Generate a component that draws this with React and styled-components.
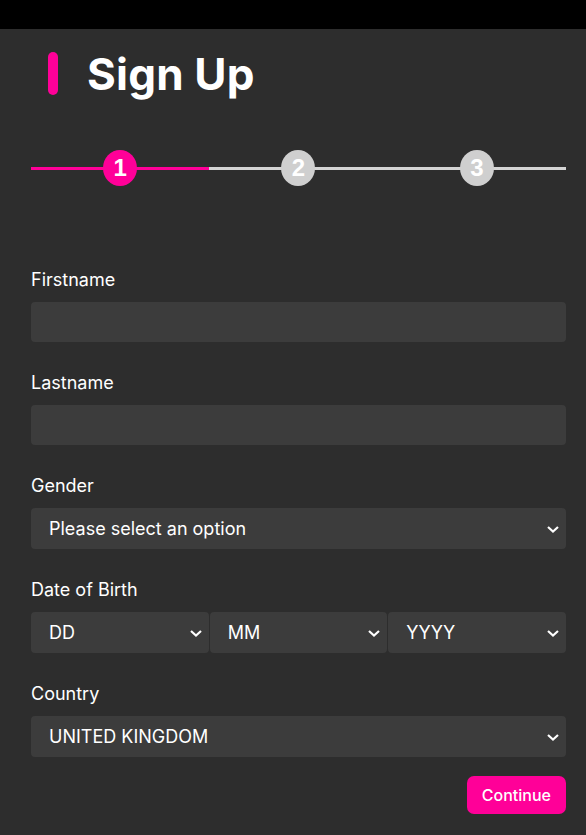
import React, { useState } from 'react';
import styled, { createGlobalStyle } from 'styled-components';

const GlobalStyle = createGlobalStyle`
  body {
    margin: 0;
    background: #2d2d2d;
    font-family: Inter, "Noto Sans", sans-serif;
    color: #ffffff;
  }
`;

const TopBar = styled.div`
  height: 29px;
  background: #000000;
`;

const Page = styled.main`
  padding: 0 20px 22px 31px;
`;

const Header = styled.header`
  display: flex;
  align-items: center;
  gap: 29px;
  padding: 23px 0 0 17px;
  height: 43px;
`;

const Accent = styled.span`
  width: 10px;
  height: 43px;
  border-radius: 5px;
  background: #ff0098;
`;

const Title = styled.h1`
  margin: 0;
  font-size: 44px;
  font-weight: 700;
  letter-spacing: 0.2px;
`;

const Stepper = styled.div`
  display: grid;
  grid-template-columns: repeat(3, 1fr);
  margin-top: 55px;
  margin-bottom: 83px;
`;

const Step = styled.div`
  position: relative;
  height: 36px;
  display: flex;
  align-items: center;
  justify-content: center;

  &::before {
    content: '';
    position: absolute;
    left: 0;
    right: 0;
    top: 50%;
    height: 3px;
    margin-top: -1.5px;
    background: ${(p) => (p.$active ? '#ff0098' : '#d4d4d4')};
  }
`;

const Dot = styled.span`
  position: relative;
  width: 34px;
  height: 36px;
  border-radius: 50%;
  background: ${(p) => (p.$active ? '#ff0098' : '#cfcfcf')};
  color: #ffffff;
  display: flex;
  align-items: center;
  justify-content: center;
  font-family: "Liberation Sans", Arial, sans-serif;
  font-weight: 700;
  font-size: 24px;
`;

const Form = styled.form`
  display: flex;
  flex-direction: column;
`;

const Field = styled.div`
  display: flex;
  flex-direction: column;
  margin-bottom: 30px;
`;

const Label = styled.label`
  font-size: 18px;
  font-weight: 400;
  line-height: 22px;
  margin-bottom: 11px;
`;

const Input = styled.input`
  box-sizing: border-box;
  height: 40px;
  border: none;
  border-radius: 4px;
  background: #3c3c3c;
  color: #fff;
  font: inherit;
  font-size: 18px;
  padding: 0 18px;
  outline: none;
`;

const SelectRow = styled.div`
  display: flex;
  gap: 1px;
`;

const SelectWrap = styled.div`
  position: relative;
  flex: 1;
`;

const Select = styled.select`
  appearance: none;
  box-sizing: border-box;
  width: 100%;
  height: 41px;
  border: none;
  border-radius: 4px;
  background: #3c3c3c;
  color: #fff;
  font-family: Inter, "Noto Sans", sans-serif;
  font-size: 18px;
  font-weight: 400;
  padding: 0 18px;
  outline: none;
`;

const Chevron = styled.svg`
  position: absolute;
  right: 6px;
  top: 50%;
  margin-top: -4px;
  pointer-events: none;
`;

const Actions = styled.div`
  display: flex;
  justify-content: flex-end;
  margin-top: -11px;
`;

const Button = styled.button`
  height: 38px;
  padding: 0 15px;
  border: none;
  border-radius: 7px;
  background: #ff0098;
  color: #ffffff;
  font-family: Inter, "Noto Sans", sans-serif;
  font-size: 16px;
  font-weight: 500;
  cursor: pointer;
`;

function Dropdown({ value, options }) {
  const [v, setV] = useState(value);
  return (
    <SelectWrap>
      <Select value={v} onChange={(e) => setV(e.target.value)}>
        {options.map((o) => (
          <option key={o}>{o}</option>
        ))}
      </Select>
      <Chevron width="14" height="9" viewBox="0 0 14 9">
        <path d="M2 2 L7 6.5 L12 2" fill="none" stroke="#ffffff" strokeWidth="2.2" />
      </Chevron>
    </SelectWrap>
  );
}

export default function App() {
  return (
    <>
      <GlobalStyle />
      <TopBar />
      <Page>
        <Header>
          <Accent />
          <Title>Sign Up</Title>
        </Header>

        <Stepper>
          {[1, 2, 3].map((n) => (
            <Step key={n} $active={n === 1}>
              <Dot $active={n === 1}>{n}</Dot>
            </Step>
          ))}
        </Stepper>

        <Form onSubmit={(e) => e.preventDefault()}>
          <Field>
            <Label>Firstname</Label>
            <Input />
          </Field>
          <Field>
            <Label>Lastname</Label>
            <Input />
          </Field>
          <Field>
            <Label>Gender</Label>
            <Dropdown value="Please select an option" options={['Please select an option', 'Male', 'Female', 'Other']} />
          </Field>
          <Field>
            <Label>Date of Birth</Label>
            <SelectRow>
              <Dropdown value="DD" options={['DD']} />
              <Dropdown value="MM" options={['MM']} />
              <Dropdown value="YYYY" options={['YYYY']} />
            </SelectRow>
          </Field>
          <Field>
            <Label>Country</Label>
            <Dropdown value="UNITED KINGDOM" options={['UNITED KINGDOM', 'UNITED STATES']} />
          </Field>
          <Actions>
            <Button type="submit">Continue</Button>
          </Actions>
        </Form>
      </Page>
    </>
  );
}
